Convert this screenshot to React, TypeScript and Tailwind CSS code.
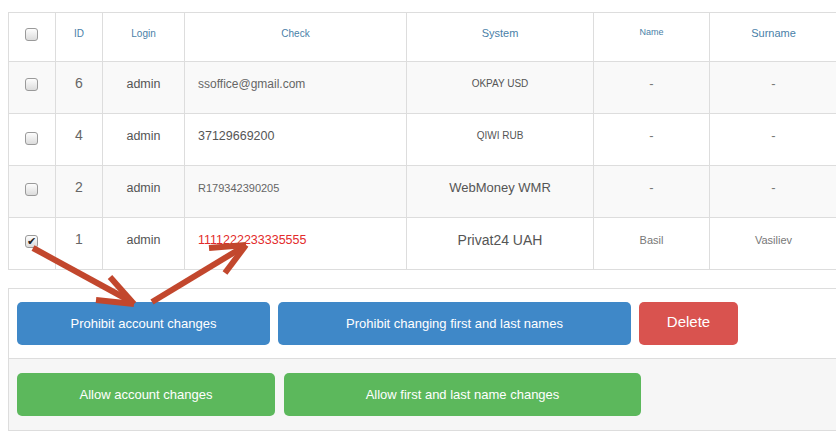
import React from "react";

const cols = "grid grid-cols-[47px_47px_82px_222px_187px_116px_127px]";

function Box({ checked = false }: { checked?: boolean }) {
  return (
    <span className="relative inline-flex h-[13px] w-[13px] items-center justify-center rounded-[3px] border border-[#9a9a9a] bg-gradient-to-b from-[#fdfdfd] to-[#dcdcdc]">
      {checked && (
        <span className="absolute left-[1px] top-[-3px] text-[11px] leading-[16px] text-[#222]">✔</span>
      )}
    </span>
  );
}

const rows = [
  { id: "6", check: "ssoffice@gmail.com", checkCls: "text-[12px] pl-[4px] text-[#666]", sys: "OKPAY USD", sysCls: "text-[10px]", name: "-", sur: "-", nameCls: "text-[13px]", gray: true, boxPt: "pt-[16px]" },
  { id: "4", check: "37129669200", checkCls: "text-[12.5px] text-[#555]", sys: "QIWI RUB", sysCls: "text-[10px]", name: "-", sur: "-", nameCls: "text-[13px]", gray: false, boxPt: "pt-[18px]" },
  { id: "2", check: "R179342390205", checkCls: "text-[11px] pl-[5px] text-[#666]", sys: "WebMoney WMR", sysCls: "text-[13px]", name: "-", sur: "-", nameCls: "text-[13px]", gray: true, boxPt: "pt-[17px]" },
  { id: "1", check: "1111222233335555", checkCls: "text-[12.5px] text-[#e32b2b]", sys: "Privat24 UAH", sysCls: "text-[14px]", name: "Basil", sur: "Vasiliev", nameCls: "text-[11px]", gray: false, checked: true, boxPt: "pt-[17px]" },
];

export default function App() {
  return (
    <div className="relative h-[438px] w-[836px] overflow-hidden bg-white font-['Liberation_Sans',Arial,sans-serif] text-[#555]">
      <div className="ml-2 mt-3 w-[828px] border-l border-t border-[#ddd]">
        <div className={`${cols} h-[49px] border-b border-[#ddd] text-[#4a7fa8]`}>
          <div className="flex items-start justify-center border-r border-[#ddd] pt-[15px] pr-[1px]"><Box /></div>
          <div className="border-r border-[#ddd] pt-[13px] text-center text-[10px]">ID</div>
          <div className="border-r border-[#ddd] pt-[13px] text-center text-[10px]">Login</div>
          <div className="border-r border-[#ddd] pt-[13px] text-center text-[10px]">Check</div>
          <div className="border-r border-[#ddd] pt-[12px] text-center text-[11px]">System</div>
          <div className="border-r border-[#ddd] pt-[13px] text-center text-[9px]">Name</div>
          <div className="pt-[12px] text-center text-[11px]">Surname</div>
        </div>
        {rows.map((r) => (
          <div key={r.id} className={`${cols} h-[52px] border-b border-[#ddd] ${r.gray ? "bg-[#f9f9f9]" : "bg-white"}`}>
            <div className={`flex items-start justify-center border-r border-[#ddd] pr-[1px] ${r.boxPt}`}><Box checked={r.checked} /></div>
            <div className="border-r border-[#ddd] pt-[11px] text-center text-[14px] leading-[20px] text-[#666]">{r.id}</div>
            <div className="border-r border-[#ddd] pt-[12px] text-center text-[12.5px] leading-[20px] text-[#555]">admin</div>
            <div className={`border-r border-[#ddd] pl-[13px] pt-[12px] leading-[20px] ${r.checkCls}`}>{r.check}</div>
            <div className={`border-r border-[#ddd] pt-[12px] text-center leading-[20px] text-[#555] ${r.sysCls}`}>{r.sys}</div>
            <div className={`border-r border-[#ddd] pt-[12px] text-center leading-[20px] text-[#777] ${r.nameCls}`}>{r.name}</div>
            <div className={`pt-[12px] text-center leading-[20px] text-[#777] ${r.nameCls}`}>{r.sur}</div>
          </div>
        ))}
      </div>

      <div className="ml-2 mt-[18px] w-[828px] border-l border-t border-b border-[#ddd]">
        <div className="flex gap-2 bg-white px-[8px] py-[13px]">
          <button className="h-[43px] w-[253px] rounded-[5px] bg-[#3f88c8] text-[13px] text-white">Prohibit account changes</button>
          <button className="h-[43px] w-[353px] rounded-[5px] bg-[#3f88c8] text-[13px] text-white">Prohibit changing first and last names</button>
          <button className="h-[43px] w-[99px] rounded-[5px] bg-[#d9534f] pb-[2px] text-[15px] text-white">Delete</button>
        </div>
        <div className="flex gap-[9px] border-t border-[#ddd] bg-[#f6f6f6] px-[8px] pt-[14px] pb-[14px]">
          <button className="h-[43px] w-[258px] rounded-[5px] bg-[#5cb85c] text-[13px] text-white">Allow account changes</button>
          <button className="h-[43px] w-[357px] rounded-[5px] bg-[#5cb85c] text-[13px] text-white">Allow first and last name changes</button>
        </div>
      </div>

      <svg className="pointer-events-none absolute left-0 top-0" width="836" height="438" viewBox="0 0 836 438">
        <g stroke="#c2472d" strokeWidth="6" strokeLinecap="butt" fill="none">
          <line x1="33" y1="248" x2="132" y2="302" />
          <line x1="110" y1="277" x2="134" y2="304" />
          <line x1="96" y1="300" x2="134" y2="304" />
          <line x1="152" y1="302" x2="243" y2="247" />
          <line x1="209" y1="248" x2="246" y2="245" />
          <line x1="225" y1="273" x2="246" y2="245" />
        </g>
      </svg>
    </div>
  );
}
